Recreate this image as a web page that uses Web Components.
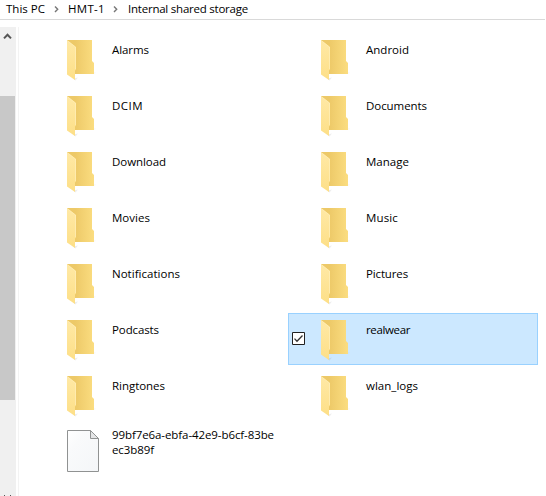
<!DOCTYPE html>
<html lang="en"><head><meta charset="utf-8"><title>Internal shared storage</title>
<style>html,body{margin:0;height:100%;overflow:hidden;background:#fff}</style></head>
<body>
<file-window></file-window>
<script>
const define = (name, html, setup) => customElements.define(name, class extends HTMLElement {
  connectedCallback() {
    if (this.shadowRoot) return;
    this.attachShadow({mode: 'open'}).innerHTML = html;
    if (setup) setup.call(this, this.shadowRoot);
  }
});

/* One line of text whose tracking is adjusted to fill the width given in "w". */
define('fit-text', `<style>:host{display:block;white-space:nowrap}span{display:inline-block}</style><span></span>`, function (root) {
  const span = root.querySelector('span');
  span.textContent = this.getAttribute('text');
  const diff = Number(this.getAttribute('w')) - span.getBoundingClientRect().width;
  span.style.letterSpacing = (diff / span.textContent.length) + 'px';
});

define('folder-icon', `<style>:host{display:block;width:30px;height:43px}svg{display:block}</style>
<svg width="30" height="43" viewBox="0 0 30 43">
<defs><linearGradient id="b" x1="0.3" y1="0" x2="1" y2="0"><stop offset="0" stop-color="#edc968"/><stop offset="1" stop-color="#fbdd80"/></linearGradient>
<linearGradient id="f" x1="0" y1="0" x2="0" y2="1"><stop offset="0" stop-color="#ffe9a6"/><stop offset="1" stop-color="#fddf87"/></linearGradient>
<linearGradient id="s" x1="0" y1="0" x2="1" y2="0"><stop offset="0" stop-color="#777" stop-opacity=".3"/><stop offset="1" stop-color="#777" stop-opacity="0"/></linearGradient></defs>
<path d="M25 32.5h5l-4 1.5h-6z" fill="url(#s)"/><path d="M6 38.5l5-1-2.500 3z" fill="#777" opacity=".13"/>
<path d="M0 0H25V21l2 2V34H0z" fill="url(#b)"/>
<path d="M0 0L9 7V29.500L8 30.500V40L0 34.500z" fill="url(#f)"/>
<path d="M.5 .8L8.500 7V29" fill="none" stroke="#fff0bd" stroke-width=".6"/></svg>`);

define('page-icon', `<style>:host{display:block;width:32px;height:42px}svg{display:block}</style>
<svg width="32" height="42" viewBox="0 0 32 42"><defs><linearGradient id="g" x1="0" y1="0" x2="1" y2="1"><stop offset="0" stop-color="#fff"/><stop offset=".3" stop-color="#f9fafb"/><stop offset="1" stop-color="#f4f6f8"/></linearGradient></defs>
<path d="M.5 .5H23.500L31.500 8.500V41.500H.5z" fill="url(#g)" stroke="#909292"/>
<path d="M23.500 .5V8.500H31.500z" fill="#e4e5e6" stroke="#909292"/></svg>`);

define('check-mark', `<style>:host{display:block;width:13px;height:13px}svg{display:block}</style>
<svg width="13" height="13"><path d="M.5 .5h12v12H.5z" fill="#fff" stroke="#222"/><path d="M2.500 6.600L5 9.200L10.500 3.500" fill="none" stroke="#333" stroke-width="1.300"/></svg>`);

define('file-tile', `<style>
:host{display:grid;box-sizing:border-box;width:250px;height:52px;border:1px solid transparent;grid-template-columns:32px 45px 1fr;align-items:start}
:host([selected]){background:#cce8ff;border-color:#99d1ff}
.check{padding:18px 0 0 3px}.icon{padding-top:6px}.text{padding-top:8px;line-height:15px}
:host([page]) .icon{padding-top:4px}:host([page]) .text{padding-top:1px}
</style><div class="check"></div><div class="icon"></div><div class="text"></div>`, function (root) {
  if (this.hasAttribute('selected')) root.querySelector('.check').innerHTML = '<check-mark></check-mark>';
  root.querySelector('.icon').innerHTML = this.hasAttribute('page') ? '<page-icon></page-icon>' : '<folder-icon></folder-icon>';
  root.querySelector('.text').innerHTML = this.getAttribute('lines').split('|').map(l => {
    const [t, w] = l.split(':'); return `<fit-text text="${t}" w="${w}"></fit-text>`;
  }).join('');
});

define('path-bar', `<style>
:host{display:flex;box-sizing:border-box;height:20px;width:545px;border-bottom:1px solid #d9d9d9;padding-left:6px;line-height:18px;align-items:flex-start}
svg{width:23px;height:19px;flex:none}
</style>
<fit-text text="This PC" w="39"></fit-text><svg><path d="M10 6.500L12.700 9.300L10 12.100" fill="none" stroke="#777" stroke-width="1.400"/></svg>
<fit-text text="HMT-1" w="37"></fit-text><svg><path d="M9 6.500L11.700 9.300L9 12.100" fill="none" stroke="#777" stroke-width="1.400"/></svg>
<fit-text text="Internal shared storage" w="120"></fit-text>`);

define('scroll-bar', `<style>
:host{display:flex;flex-direction:column;box-sizing:border-box;width:16px;background:#f0f0f0;overflow:hidden}
.up{height:69px;flex:none}.thumb{width:15px;height:304px;background:#c8c8c8;flex:none}.down{margin-top:auto;height:2px}svg{display:block}
</style><div class="up"><svg width="16" height="20"><path d="M4 11.400L7.500 7.800L11 11.400" fill="none" stroke="#555" stroke-width="2"/></svg></div>
<div class="thumb"></div><svg class="down" width="16" height="2"><path d="M4 1h1v1h-1zM10 1h1v1h-1z" fill="#555"/></svg>`);

define('file-window', `<style>
:host{display:flex;flex-direction:column;width:546px;height:496px;overflow:hidden;background:#fff;color:#000;font:11.5px "Open Sans","Noto Sans",sans-serif}
.body{flex:1;display:flex;padding-top:7px;min-height:0}
.line{width:1px;margin-left:2px;background:#f3f3f3}
.grid{display:grid;grid-template-columns:250px 250px;grid-auto-rows:52px;gap:4px;align-content:start;padding:6px 0 0 15px}
</style><path-bar></path-bar><div class="body"><scroll-bar></scroll-bar><div class="line"></div><div class="grid">
<file-tile lines="Alarms:37"></file-tile><file-tile lines="Android:43"></file-tile>
<file-tile lines="DCIM:31"></file-tile><file-tile lines="Documents:61"></file-tile>
<file-tile lines="Download:54"></file-tile><file-tile lines="Manage:43"></file-tile>
<file-tile lines="Movies:38"></file-tile><file-tile lines="Music:32"></file-tile>
<file-tile lines="Notifications:68"></file-tile><file-tile lines="Pictures:42"></file-tile>
<file-tile lines="Podcasts:47"></file-tile><file-tile lines="realwear:44" selected></file-tile>
<file-tile lines="Ringtones:53"></file-tile><file-tile lines="wlan_logs:52"></file-tile>
<file-tile page lines="99bf7e6a-ebfa-42e9-b6cf-83be:162|ec3b89f:42"></file-tile>
</div></div>`);
</script>
</body></html>
